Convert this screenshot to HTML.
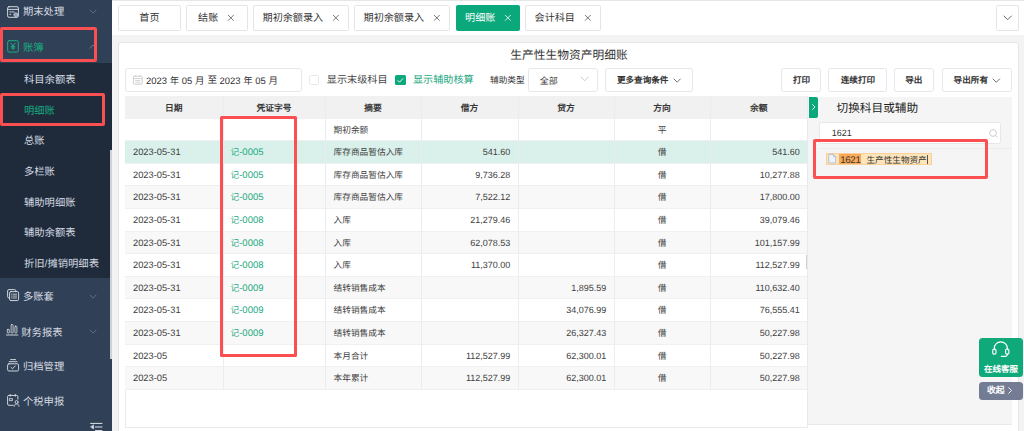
<!DOCTYPE html>
<html lang="zh-CN">
<head>
<meta charset="utf-8">
<title>生产性生物资产明细账</title>
<style>
*{box-sizing:border-box;margin:0;padding:0}
html,body{width:1024px;height:431px;overflow:hidden}
body{position:relative;background:#f3f3f3;font-family:"Liberation Sans",sans-serif;color:#333;font-size:10px;line-height:1;text-rendering:geometricPrecision}
svg{display:block;position:absolute;overflow:visible}
.a{position:absolute;white-space:nowrap}

/* sidebar */
#side{position:absolute;left:0;top:0;width:112px;height:431px;background:#304056;overflow:hidden}
#sub{position:absolute;left:0;top:63px;width:112px;height:215px;background:#1f2b3b}
.mi{position:absolute;left:23px;height:14px;line-height:14px;color:#d6dbe2;font-size:10.3px;white-space:nowrap}
.si{position:absolute;left:24px;height:14px;line-height:14px;color:#d6dbe2;font-size:10.3px;white-space:nowrap}
.gr{color:#18aa7f}
.red{position:absolute;border:3.3px solid #fb4f52;border-radius:2px}
#thumb{position:absolute;left:110.4px;top:150px;width:1.6px;height:208.5px;background:#cfd2d7}

/* tabs */
#topline{position:absolute;left:112px;top:0;width:912px;height:1px;background:#e6e6e8}
#tabbar{position:absolute;left:112px;top:1px;width:912px;height:34px;background:#fff}
.tab{position:absolute;top:5px;height:26px;border:1px solid #e4e5e8;border-radius:1.5px;background:#fff;color:#333;font-size:10.1px;line-height:25px;white-space:nowrap}
.tab .t{position:absolute;top:0}
.tab.on{background:#0ba87c;border-color:#0ba87c;color:#fff;height:25.5px}

/* card */
#card{position:absolute;left:118px;top:42px;width:901px;height:400px;background:#fff;border:1px solid #e4e5e8;border-radius:3px}
#title{position:absolute;left:119px;top:48.9px;width:900px;text-align:center;font-size:11.75px;line-height:14px;color:#333}
.box{position:absolute;top:67.6px;height:24px;border:1px solid #e5e6ec;border-radius:2.5px;background:#fff;white-space:nowrap}
.btn{font-size:8.6px;font-weight:bold;color:#333;line-height:23.6px}
.btn span{position:absolute;top:0}

/* table */
#tbl{position:absolute;left:125px;top:96px;width:683px;height:331.6px;background:#fff;border:1px solid #e9eaef;border-top:none}
.r{position:absolute;left:125px;width:682px;height:22.6px;background:#fff}
.r.h{background:#f1f1f2;font-weight:bold}
.r.g{background:#f8f8f8}
.r.m{background:#d9f1ea}
.c{position:absolute;top:0;height:100%;border-right:1px solid #ebecf0;border-bottom:1px solid #f0f0f2;font-size:8.7px;line-height:23.2px;white-space:nowrap;color:#404040;overflow:hidden}
.c.n{font-size:9px;text-align:right;padding-right:7.2px;line-height:23.4px}
.c.d{font-size:9.3px;padding-left:8px;line-height:23.4px}
.c.v{font-size:9.5px;padding-left:7px;color:#22a982}
.c.v i{font-style:normal;font-size:8.7px}
.c.s{padding-left:8px}
.c.f{text-align:center}
.h .c{text-align:center;padding:0;font-size:8.75px;line-height:25.2px;color:#383838}
.c1{left:0;width:98.5px}.c2{left:98.5px;width:102px}.c3{left:200.5px;width:96px}.c4{left:296.5px;width:97px}.c5{left:393.5px;width:96px}.c6{left:489.5px;width:96px}.c7{left:585.5px;width:96.5px;border-right:none}

/* right panel */
#rp{position:absolute;left:808px;top:96.5px;width:204px;height:328.5px;background:#f5f5f5;border-bottom:1px solid #e9e9ea}
</style>
</head>
<body>
<div id="side">
<div id="sub"></div>
<div class="mi" style="top:6.2px">期末处理</div>
<svg style="left:89.5px;top:9.50px" width="6" height="3.2" viewBox="0 0 6 3.2"><polyline points="0,0 3.0,3.2 6,0" fill="none" stroke="#6d7989" stroke-width="0.8" stroke-linecap="round" stroke-linejoin="round"/></svg>
<div class="mi gr" style="top:41.6px">账簿</div>
<svg style="left:89.5px;top:44.90px" width="6" height="3.2" viewBox="0 0 6 3.2"><polyline points="0,3.2 3.0,0 6,3.2" fill="none" stroke="#7d8a9c" stroke-width="0.8" stroke-linecap="round" stroke-linejoin="round"/></svg>
<div class="mi" style="top:291.2px">多账套</div>
<svg style="left:89.5px;top:294.50px" width="6" height="3.2" viewBox="0 0 6 3.2"><polyline points="0,0 3.0,3.2 6,0" fill="none" stroke="#6d7989" stroke-width="0.8" stroke-linecap="round" stroke-linejoin="round"/></svg>
<div class="mi" style="top:326.8px;left:21.3px">财务报表</div>
<svg style="left:89.5px;top:330.10px" width="6" height="3.2" viewBox="0 0 6 3.2"><polyline points="0,0 3.0,3.2 6,0" fill="none" stroke="#6d7989" stroke-width="0.8" stroke-linecap="round" stroke-linejoin="round"/></svg>
<div class="mi" style="top:361.1px">归档管理</div>
<div class="mi" style="top:395.8px">个税申报</div>
<div class="si" style="top:74.4px">科目余额表</div>
<div class="si gr" style="top:104.8px">明细账</div>
<div class="si" style="top:135.4px">总账</div>
<div class="si" style="top:166.0px">多栏账</div>
<div class="si" style="top:196.5px">辅助明细账</div>
<div class="si" style="top:227.0px">辅助余额表</div>
<div class="si" style="top:257.5px">折旧/摊销明细表</div>
<svg style="left:7.3px;top:5.7px" width="12" height="12" viewBox="0 0 12 12" fill="none" stroke="#dfe4ea" stroke-width="0.9" stroke-linecap="round" stroke-linejoin="round"><rect x="0.6" y="0.7" width="10.8" height="10.6" rx="1.4"/><path d="M0.6 3.4H11.4M2.8 5.9H4.4M5.4 5.9H7M2.8 8.3H3.8"/><circle cx="8.8" cy="8.7" r="2" fill="#8fa0b8" stroke="#bcc6d4" stroke-width="0.8"/></svg>
<svg style="left:7.3px;top:40.2px" width="12" height="12.8" viewBox="0 0 12 12.8" fill="none" stroke="#dfe4ea" stroke-width="0.9" stroke-linecap="round" stroke-linejoin="round"><g stroke="#19b083"><rect x="0.7" y="0.7" width="10.6" height="11.4" rx="1.5" stroke-width="1"/><path d="M4 3.2L6 6.1L8 3.2M6 6.1V9.6M4.2 6.4H7.8M4.2 8H7.8" stroke-width="0.95"/></g></svg>
<svg style="left:7px;top:289.1px" width="12.2" height="12.2" viewBox="0 0 12.2 12.2" fill="none" stroke="#dfe4ea" stroke-width="0.9" stroke-linecap="round" stroke-linejoin="round"><path d="M2.4 8.9H1.9A1.3 1.3 0 0 1 0.6 7.6V1.9A1.3 1.3 0 0 1 1.9 0.6H7.6A1.3 1.3 0 0 1 8.9 1.9V2.4"/><rect x="2.6" y="2.6" width="9" height="9" rx="1.3"/><path d="M4.6 5.2H5.2M6.4 5.2H9.6M4.6 7.1H5.2M6.4 7.1H9.6M4.6 9H5.2M6.4 9H9.6" stroke-width="0.8"/></svg>
<svg style="left:6.3px;top:323.8px" width="12.4" height="11.8" viewBox="0 0 12.4 11.8" fill="none" stroke="#dfe4ea" stroke-width="0.9" stroke-linecap="round" stroke-linejoin="round"><rect x="1.3" y="5.4" width="2" height="3.6" rx="0.6" stroke-width="0.8"/><rect x="5.1" y="0.6" width="2" height="8.4" rx="0.6" stroke-width="0.8"/><rect x="8.9" y="2.2" width="2" height="6.8" rx="0.6" stroke-width="0.8"/><path d="M0.5 11H11.9"/></svg>
<svg style="left:7px;top:359px" width="12.2" height="12.6" viewBox="0 0 12.2 12.6" fill="none" stroke="#dfe4ea" stroke-width="0.9" stroke-linecap="round" stroke-linejoin="round"><path d="M3.6 0.6H8.6M2.2 2.7H10"/><rect x="0.6" y="4.8" width="11" height="7.2" rx="1.4"/><path d="M4 8.3L5.5 9.8L8.3 6.9"/></svg>
<svg style="left:7px;top:394.4px" width="13" height="12.8" viewBox="0 0 13 12.8" fill="none" stroke="#dfe4ea" stroke-width="0.9" stroke-linecap="round" stroke-linejoin="round"><path d="M6.2 11.3H1.9A1.3 1.3 0 0 1 0.6 10V2.7A1.3 1.3 0 0 1 1.9 1.4H9.6A1.3 1.3 0 0 1 10.9 2.7V5.2M3.2 0.5V2.2M8.3 0.5V2.2"/><rect x="2.8" y="4.6" width="2.6" height="2" stroke-width="0.8"/><circle cx="9.6" cy="8.1" r="1.5" stroke-width="0.85"/><path d="M7.2 12.3C7.2 10.7 8.2 10 9.6 10C11 10 12 10.7 12 12.3" stroke-width="0.85"/></svg>
<svg style="left:89.6px;top:422px" width="12.6" height="9" viewBox="0 0 12.6 9" fill="none" stroke="#dfe4ea" stroke-width="0.9" stroke-linecap="round" stroke-linejoin="round"><path d="M0.6 1.4H12M5.4 5H12M5.4 8.6H12" stroke-width="1"/><path d="M3.6 3.1V6.9L0.7 5Z" fill="#dfe4ea" stroke-width="0.5"/></svg>
<div class="red" style="left:-0.4px;top:27.3px;width:97.3px;height:34.8px"></div>
<div class="red" style="left:-0.2px;top:93.3px;width:105.6px;height:33.2px"></div>
</div>
<div id="thumb"></div>
<div id="topline"></div>
<div id="tabbar"></div>
<div class="tab" style="left:118px;width:62.6px"><span class="t" style="left:20.3px">首页</span></div>
<div class="tab" style="left:185.6px;width:62px"><span class="t" style="left:11.5px">结账</span><svg style="left:41.900000000000006px;top:8.85px" width="5.7" height="5.7" viewBox="0 0 5.7 5.7"><path d="M0 0L5.7 5.7M5.7 0L0 5.7" fill="none" stroke="#555" stroke-width="0.8"/></svg></div>
<div class="tab" style="left:253px;width:95.5px"><span class="t" style="left:8.6px">期初余额录入</span><svg style="left:79.2px;top:8.85px" width="5.7" height="5.7" viewBox="0 0 5.7 5.7"><path d="M0 0L5.7 5.7M5.7 0L0 5.7" fill="none" stroke="#555" stroke-width="0.8"/></svg></div>
<div class="tab" style="left:354px;width:96.2px"><span class="t" style="left:8.6px">期初余额录入</span><svg style="left:79.2px;top:8.85px" width="5.7" height="5.7" viewBox="0 0 5.7 5.7"><path d="M0 0L5.7 5.7M5.7 0L0 5.7" fill="none" stroke="#555" stroke-width="0.8"/></svg></div>
<div class="tab on" style="left:455.6px;width:64.6px"><span class="t" style="left:8.5px">明细账</span><svg style="left:48.0px;top:8.85px" width="5.7" height="5.7" viewBox="0 0 5.7 5.7"><path d="M0 0L5.7 5.7M5.7 0L0 5.7" fill="none" stroke="#fff" stroke-width="0.8"/></svg></div>
<div class="tab" style="left:525px;width:76px"><span class="t" style="left:8.6px">会计科目</span><svg style="left:59.2px;top:8.85px" width="5.7" height="5.7" viewBox="0 0 5.7 5.7"><path d="M0 0L5.7 5.7M5.7 0L0 5.7" fill="none" stroke="#555" stroke-width="0.8"/></svg></div>
<div class="tab" style="left:995.5px;width:23px"><svg style="left:7.1px;top:10.25px" width="7.4" height="3.7" viewBox="0 0 7.4 3.7"><polyline points="0,0 3.7,3.7 7.4,0" fill="none" stroke="#555" stroke-width="0.9" stroke-linecap="round" stroke-linejoin="round"/></svg></div>
<div id="card"></div>
<div id="title">生产性生物资产明细账</div>
<div class="box" style="left:125px;width:176.6px"></div>
<svg style="left:133px;top:74.7px" width="9.6" height="9.6" viewBox="0 0 9.6 9.2" preserveAspectRatio="none"><rect x="0.4" y="1.2" width="8.8" height="7.6" rx="0.8" fill="none" stroke="#c3c4c8" stroke-width="0.8"/><path d="M0.4 3.4H9.2M2.2 5.2H7.4M2.2 6.9H7.4M2.6 0.2V1.6M7 0.2V1.6" stroke="#c3c4c8" stroke-width="0.7" fill="none"/></svg>
<div class="a" style="left:146.1px;top:74.9px;font-size:9.45px;line-height:14px;color:#333">2023 年 05 月</div>
<div class="a" style="left:207.6px;top:74.1px;font-size:9.6px;line-height:14px;color:#333">至</div>
<div class="a" style="left:219.6px;top:74.9px;font-size:9.45px;line-height:14px;color:#333">2023 年 05 月</div>
<div class="a" style="left:309px;top:75px;width:10.3px;height:10.3px;border:1px solid #e8e9ee;border-radius:1.5px;background:#fff"></div>
<div class="a" style="left:326.8px;top:73.7px;font-size:10.15px;line-height:14px;color:#444">显示末级科目</div>
<div class="a" style="left:395px;top:75px;width:10.6px;height:10.4px;border-radius:1.5px;background:#0ba87c"></div>
<svg style="left:395px;top:75px" width="10.6" height="10.4" viewBox="0 0 10.6 10.4"><polyline points="2.6,5.3 4.5,7.2 8.1,3.4" fill="none" stroke="#fff" stroke-width="0.9"/></svg>
<div class="a" style="left:413px;top:73.7px;font-size:10.15px;line-height:14px;color:#1aa67e">显示辅助核算</div>
<div class="a" style="left:490.1px;top:73.4px;font-size:8.65px;line-height:14px;color:#333">辅助类型</div>
<div class="box" style="left:527.7px;width:70.4px"></div>
<div class="a" style="left:539.7px;top:73.6px;font-size:9px;line-height:14px;color:#333">全部</div>
<svg style="left:581.2px;top:77.30px" width="7.2" height="3.8" viewBox="0 0 7.2 3.8"><polyline points="0,0 3.6,3.8 7.2,0" fill="none" stroke="#c2c3c8" stroke-width="0.8" stroke-linecap="round" stroke-linejoin="round"/></svg>
<div class="box btn" style="left:605.3px;width:87.4px"><span style="left:10.6px">更多查询条件</span></div>
<svg style="left:674px;top:78.80px" width="6.3" height="3.2" viewBox="0 0 6.3 3.2"><polyline points="0,0 3.15,3.2 6.3,0" fill="none" stroke="#555" stroke-width="0.85" stroke-linecap="round" stroke-linejoin="round"/></svg>
<div class="box btn" style="left:781.2px;width:40.2px"><span style="left:10.8px">打印</span></div>
<div class="box btn" style="left:828.3px;width:58.3px"><span style="left:11.4px">连续打印</span></div>
<div class="box btn" style="left:894px;width:40.2px"><span style="left:10.2px">导出</span></div>
<div class="box btn" style="left:942px;width:70px"><span style="left:10.6px">导出所有</span></div>
<svg style="left:993.4px;top:78.55px" width="6.6" height="3.3" viewBox="0 0 6.6 3.3"><polyline points="0,0 3.3,3.3 6.6,0" fill="none" stroke="#555" stroke-width="0.85" stroke-linecap="round" stroke-linejoin="round"/></svg>
<div id="tbl"></div>
<div class="r h" style="top:96px"><div class="c c1">日期</div><div class="c c2">凭证字号</div><div class="c c3">摘要</div><div class="c c4">借方</div><div class="c c5">贷方</div><div class="c c6">方向</div><div class="c c7">余额</div></div>
<div class="r " style="top:118.6px"><div class="c c1 d"></div><div class="c c2 v"></div><div class="c c3 s">期初余额</div><div class="c c4 n"></div><div class="c c5 n"></div><div class="c c6 f">平</div><div class="c c7 n"></div></div>
<div class="r m" style="top:141.2px"><div class="c c1 d">2023-05-31</div><div class="c c2 v"><i>记</i>-0005</div><div class="c c3 s">库存商品暂估入库</div><div class="c c4 n">541.60</div><div class="c c5 n"></div><div class="c c6 f">借</div><div class="c c7 n">541.60</div></div>
<div class="r " style="top:163.8px"><div class="c c1 d">2023-05-31</div><div class="c c2 v"><i>记</i>-0005</div><div class="c c3 s">库存商品暂估入库</div><div class="c c4 n">9,736.28</div><div class="c c5 n"></div><div class="c c6 f">借</div><div class="c c7 n">10,277.88</div></div>
<div class="r g" style="top:186.4px"><div class="c c1 d">2023-05-31</div><div class="c c2 v"><i>记</i>-0005</div><div class="c c3 s">库存商品暂估入库</div><div class="c c4 n">7,522.12</div><div class="c c5 n"></div><div class="c c6 f">借</div><div class="c c7 n">17,800.00</div></div>
<div class="r " style="top:209.0px"><div class="c c1 d">2023-05-31</div><div class="c c2 v"><i>记</i>-0008</div><div class="c c3 s">入库</div><div class="c c4 n">21,279.46</div><div class="c c5 n"></div><div class="c c6 f">借</div><div class="c c7 n">39,079.46</div></div>
<div class="r g" style="top:231.6px"><div class="c c1 d">2023-05-31</div><div class="c c2 v"><i>记</i>-0008</div><div class="c c3 s">入库</div><div class="c c4 n">62,078.53</div><div class="c c5 n"></div><div class="c c6 f">借</div><div class="c c7 n">101,157.99</div></div>
<div class="r " style="top:254.2px"><div class="c c1 d">2023-05-31</div><div class="c c2 v"><i>记</i>-0008</div><div class="c c3 s">入库</div><div class="c c4 n">11,370.00</div><div class="c c5 n"></div><div class="c c6 f">借</div><div class="c c7 n">112,527.99</div></div>
<div class="r g" style="top:276.8px"><div class="c c1 d">2023-05-31</div><div class="c c2 v"><i>记</i>-0009</div><div class="c c3 s">结转销售成本</div><div class="c c4 n"></div><div class="c c5 n">1,895.59</div><div class="c c6 f">借</div><div class="c c7 n">110,632.40</div></div>
<div class="r " style="top:299.4px"><div class="c c1 d">2023-05-31</div><div class="c c2 v"><i>记</i>-0009</div><div class="c c3 s">结转销售成本</div><div class="c c4 n"></div><div class="c c5 n">34,076.99</div><div class="c c6 f">借</div><div class="c c7 n">76,555.41</div></div>
<div class="r g" style="top:322.0px"><div class="c c1 d">2023-05-31</div><div class="c c2 v"><i>记</i>-0009</div><div class="c c3 s">结转销售成本</div><div class="c c4 n"></div><div class="c c5 n">26,327.43</div><div class="c c6 f">借</div><div class="c c7 n">50,227.98</div></div>
<div class="r " style="top:344.6px"><div class="c c1 d">2023-05</div><div class="c c2 v"></div><div class="c c3 s">本月合计</div><div class="c c4 n">112,527.99</div><div class="c c5 n">62,300.01</div><div class="c c6 f">借</div><div class="c c7 n">50,227.98</div></div>
<div class="r g" style="top:367.2px"><div class="c c1 d">2023-05</div><div class="c c2 v"></div><div class="c c3 s">本年累计</div><div class="c c4 n">112,527.99</div><div class="c c5 n">62,300.01</div><div class="c c6 f">借</div><div class="c c7 n">50,227.98</div></div>
<div class="a" style="left:220.4px;top:115.7px;width:76.5px;height:241px;border:3.2px solid #fb4f52;border-radius:1.5px"></div>
<div class="a" style="left:806.3px;top:255.4px;width:1.2px;height:13.4px;background:#cfcfd2"></div>
<div id="rp"></div>
<div class="a" style="left:808.8px;top:96.7px;width:9.4px;height:21.3px;background:#0ba87c;border-radius:0 2px 2px 0"></div>
<svg style="left:811.8px;top:104.4px" width="3.4" height="6" viewBox="0 0 3.4 6"><polyline points="0.3,0.3 3,3 0.3,5.7" fill="none" stroke="#fff" stroke-width="0.9"/></svg>
<div class="a" style="left:836.6px;top:102px;font-size:11.65px;line-height:14px;color:#222">切换科目或辅助</div>
<div class="a" style="left:819px;top:121.8px;width:181.5px;height:22.4px;background:#fff;border:1px solid #e6e7ea;border-radius:2.5px"></div>
<div class="a" style="left:831.8px;top:126px;font-size:9px;line-height:14px;color:#333">1621</div>
<svg style="left:988.5px;top:128.5px" width="9" height="9" viewBox="0 0 9 9"><circle cx="4" cy="4" r="3.4" fill="none" stroke="#c2c3c8" stroke-width="0.8"/><path d="M6.5 6.5L8.4 8.4" stroke="#c2c3c8" stroke-width="0.8"/></svg>
<div class="a" style="left:819px;top:148px;width:193px;height:1px;background:#ececee"></div>
<div class="a" style="left:825.7px;top:152.9px;width:106.3px;height:12.3px;background:#fde5bb;border:0.5px solid #f8d199"></div>
<svg style="left:827.8px;top:154.2px" width="8.4" height="9.4" viewBox="0 0 7.6 9.2"><path d="M0.4 0.4H5L7.2 2.6V8.8H0.4Z" fill="#eef3fb" stroke="#9fb2cf" stroke-width="0.7"/><path d="M5 0.4V2.6H7.2" fill="#cfdcf0" stroke="#9fb2cf" stroke-width="0.6"/></svg>
<div class="a" style="left:839.2px;top:153.5px;width:21.8px;height:10.6px;background:#f9a855"></div>
<div class="a" style="left:840.2px;top:153.5px;font-size:9.7px;letter-spacing:-0.3px;line-height:14px;color:#3a3a3a">1621</div>
<div class="a" style="left:866.5px;top:152.9px;font-size:8.6px;line-height:14px;color:#333">生产性生物资产</div>
<div class="a" style="left:927.4px;top:154.6px;width:0.6px;height:9px;background:#555"></div>
<div class="a" style="left:812.6px;top:139.4px;width:175px;height:39.8px;border:3.1px solid #fb4f52;border-radius:2px"></div>
<div class="a" style="left:979.2px;top:338px;width:43.5px;height:39px;background:#10a97a;border-radius:3.5px"></div>
<svg style="left:992px;top:341px" width="17.6" height="16" viewBox="0 0 17.6 16" fill="none" stroke="#fff" stroke-width="1.15" stroke-linecap="round"><path d="M2.3 8.6V7.3A6.5 6.5 0 0 1 15.3 7.3V8.6"/><rect x="0.7" y="8" width="3.3" height="5.2" rx="1.5"/><rect x="13.6" y="8" width="3.3" height="5.2" rx="1.5"/><path d="M15.3 13.2V13.6A1.8 1.8 0 0 1 13.5 15.4H9.4"/></svg>
<div class="a" style="left:979.2px;top:362.6px;width:43.5px;text-align:center;font-size:8.5px;font-weight:bold;line-height:13px;color:#fff">在线客服</div>
<div class="a" style="left:979.2px;top:381.6px;width:43.5px;height:18.2px;background:#737c93;border-radius:3.5px"></div>
<div class="a" style="left:987px;top:384.4px;font-size:8.8px;font-weight:bold;line-height:13px;color:#fff">收起</div>
<svg style="left:1008.4px;top:387.3px" width="4" height="7" viewBox="0 0 4 7"><polyline points="0.4,0.4 3.5,3.5 0.4,6.6" fill="none" stroke="#fff" stroke-width="0.9"/></svg>
</body>
</html>
